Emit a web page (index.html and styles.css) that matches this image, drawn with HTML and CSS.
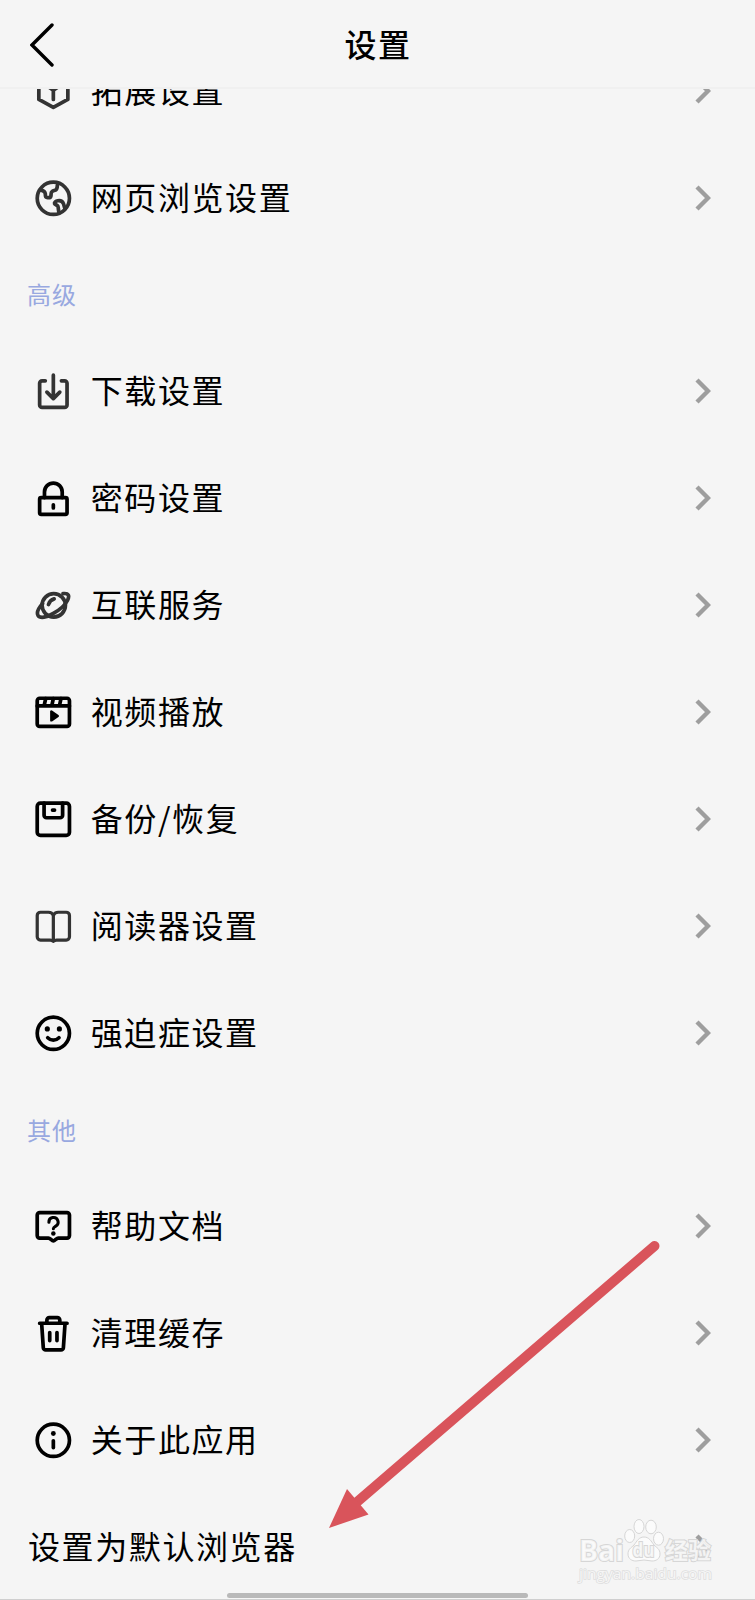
FILE: index.html
```html
<!DOCTYPE html>
<html lang="zh-CN">
   <head>
      <meta charset="utf-8">
      <title>设置</title>
      <link rel="stylesheet" href="styles.css">
   </head>
   <body>
      <div class="page">
         <div class="header">
            <svg class="back" viewBox="0 0 24 44"><path d="M22 2L2 22l20 20"/></svg>
            <h1 class="title">设置</h1>
         </div>
         <div class="list">
            <div class="row first">
               <svg class="icon dark" viewBox="0 0 48 48"><path d="M24 4L6 13v21l18 10 18-10V13zM15 16.500l9 6 9-6M24 23v11"/></svg>
               <span class="name">拓展设置</span>
               <svg class="more" viewBox="0 0 16 26"><path d="M2 2l11 11L2 24"/></svg>
            </div>
            <div class="row">
               <svg class="icon dark" viewBox="0 0 48 48"><circle cx="24" cy="24" r="20"/><path d="M8.500 13.500c3 1 5 2 5.500 4.500.3 2-.5 4.500 2 5 2.500.5 4.500 0 5-2 .5-2-.5-4 1.500-5.500s4.500-1 5.500-3c.8-1.500 1-3 1-5M38.500 37c-1-2-1-4-2-6.500-1.200-3-4-4-7-3.500-2.500.5-4.500 2-4 3.500.5 1.300 3 1.500 4 3 1 2 .5 5 1.500 8"/></svg>
               <span class="name">网页浏览设置</span>
               <svg class="more" viewBox="0 0 16 26"><path d="M2 2l11 11L2 24"/></svg>
            </div>

            <h2 class="group">高级</h2>
            <div class="row">
               <svg class="icon dark" viewBox="0 0 48 48"><path d="M14 11h-4a3 3 0 0 0-3 3v27a3 3 0 0 0 3 3h28a3 3 0 0 0 3-3V14a3 3 0 0 0-3-3h-4M24 4v28M16 25l8 8 8-8"/></svg>
               <span class="name">下载设置</span>
               <svg class="more" viewBox="0 0 16 26"><path d="M2 2l11 11L2 24"/></svg>
            </div>
            <div class="row">
               <svg class="icon" viewBox="0 0 48 48"><rect x="7" y="23" width="34" height="21" rx="2"/><path d="M13 23v-7a11 11 0 0 1 22 0v7M24 32v4"/></svg>
               <span class="name">密码设置</span>
               <svg class="more" viewBox="0 0 16 26"><path d="M2 2l11 11L2 24"/></svg>
            </div>
            <div class="row">
               <svg class="icon dark" viewBox="0 0 48 48"><circle cx="24.500" cy="24" r="14.500"/><path d="M10.500 22C6 27 3 33 5 36.500c2.500 4 11 2.500 19-2.500 8-4.500 14.500-10 17.500-16 3-6 1.500-9.500-5.500-8.500M18 23c1-3.500 3.500-6 7-7"/></svg>
               <span class="name">互联服务</span>
               <svg class="more" viewBox="0 0 16 26"><path d="M2 2l11 11L2 24"/></svg>
            </div>
            <div class="row">
               <svg class="icon" viewBox="0 0 48 48"><rect x="4" y="6.500" width="40" height="35" rx="3"/><path d="M4 16h40M14.500 7l-2 9M24 7l-2 9M33.500 7l-2 9"/><path class="solid" d="M21.500 23v11l8-5.500z"/></svg>
               <span class="name">视频播放</span>
               <svg class="more" viewBox="0 0 16 26"><path d="M2 2l11 11L2 24"/></svg>
            </div>
            <div class="row">
               <svg class="icon" viewBox="0 0 48 48"><rect x="4" y="4" width="40" height="40" rx="4"/><path d="M12.500 4v15a3 3 0 0 0 3 3h17a3 3 0 0 0 3-3V4M23 12.500h2.500"/></svg>
               <span class="name">备份/恢复</span>
               <svg class="more" viewBox="0 0 16 26"><path d="M2 2l11 11L2 24"/></svg>
            </div>
            <div class="row">
               <svg class="icon dark thin" viewBox="0 0 48 48"><path d="M24 10.500c-1-2.500-3-4-6-4H8a4 4 0 0 0-4 4V37a4 4 0 0 0 4 4h12c2 0 3 .5 4 1.500 1-1 2-1.500 4-1.500h12a4 4 0 0 0 4-4V10.500a4 4 0 0 0-4-4H30c-3 0-5 1.500-6 4zv32"/></svg>
               <span class="name">阅读器设置</span>
               <svg class="more" viewBox="0 0 16 26"><path d="M2 2l11 11L2 24"/></svg>
            </div>
            <div class="row">
               <svg class="icon" viewBox="0 0 48 48"><circle cx="24" cy="24" r="20"/><path d="M17 29.500c4 4 10 4 14 0"/><circle class="dot" cx="16.500" cy="18.500" r="3.200"/><circle class="dot" cx="31.500" cy="18.500" r="3.200"/></svg>
               <span class="name">强迫症设置</span>
               <svg class="more" viewBox="0 0 16 26"><path d="M2 2l11 11L2 24"/></svg>
            </div>

            <h2 class="group other">其他</h2>
            <div class="row">
               <svg class="icon" viewBox="0 0 48 48"><path d="M7 7h34a3 3 0 0 1 3 3v25.500a3 3 0 0 1-3 3H30c-2 0-4 3.500-6 3.500s-4-3.500-6-3.500H7a3 3 0 0 1-3-3V10a3 3 0 0 1 3-3z"/><path class="q" d="M18.500 19a5.700 5.700 0 1 1 8.500 4.700c-2 1.200-3 2-3 3.300"/><circle class="dot" cx="24" cy="33" r="2.800"/></svg>
               <span class="name">帮助文档</span>
               <svg class="more" viewBox="0 0 16 26"><path d="M2 2l11 11L2 24"/></svg>
            </div>
            <div class="row">
               <svg class="icon" viewBox="0 0 48 48"><path d="M7 11.500h34M16 11V7.500a3 3 0 0 1 3-3h10a3 3 0 0 1 3 3V11M9.500 12l2 29.500a3 3 0 0 0 3 3h19a3 3 0 0 0 3-3l2-29.500M19.500 23v10M28.500 23v10"/></svg>
               <span class="name">清理缓存</span>
               <svg class="more" viewBox="0 0 16 26"><path d="M2 2l11 11L2 24"/></svg>
            </div>
            <div class="row">
               <svg class="icon" viewBox="0 0 48 48"><circle cx="24" cy="24" r="20"/><path d="M24 24.500v8.500"/><circle class="dot" cx="24" cy="15.500" r="3"/></svg>
               <span class="name">关于此应用</span>
               <svg class="more" viewBox="0 0 16 26"><path d="M2 2l11 11L2 24"/></svg>
            </div>
            <div class="row plain">
               <span class="name">设置为默认浏览器</span>
               <svg class="more" viewBox="0 0 16 26"><path d="M2 2l11 11L2 24"/></svg>
            </div>
         </div>

         <svg class="arrow" viewBox="0 0 340 296">
            <path class="shaft" d="M329.500 11L32 267"/>
            <path class="head" d="M4 293l18-39 21.500 25.500z"/>
         </svg>

         <svg class="watermark" viewBox="0 0 145 75">
            <text class="brand" x="4" y="46" textLength="45" lengthAdjust="spacingAndGlyphs">Bai</text>
            <ellipse cx="54.700" cy="21" rx="5" ry="6.500"/>
            <ellipse cx="64" cy="11.500" rx="5" ry="7"/>
            <ellipse cx="76" cy="12" rx="5.300" ry="6.800"/>
            <ellipse cx="83.500" cy="23.700" rx="5" ry="6.500"/>
            <path d="M69 22c5 0 7 4 10 8 3 3 6 4 6 9 0 5-4 7-8 7-3 0-5-1-8-1s-5 1-8 1c-4 0-8-2-8-7s3-6 6-9c3-4 5-8 10-8z"/>
            <text class="du" x="57.500" y="41.500" textLength="22" lengthAdjust="spacingAndGlyphs">du</text>
            <text class="cn" x="90" y="44" textLength="46" lengthAdjust="spacingAndGlyphs">经验</text>
            <text class="url" x="4" y="64" textLength="133" lengthAdjust="spacingAndGlyphs">jingyan.baidu.com</text>
         </svg>
         <div class="homebar"></div>
      </div>
   </body>
</html>
```

FILE: styles.css
```css
body{
margin: 0;
background-color: #f5f5f5;
font-family: "Noto Sans CJK SC", sans-serif;
color: #000;
}
.page{
position: relative;
box-sizing: border-box;
height: 1600px;
overflow: hidden;
border-bottom: 1px solid #cfcfcf;
display: flex;
flex-direction: column;
}
.header{
box-sizing: border-box;
flex: none;
height: 89px;
padding: 0 31px 0 30px;
border-bottom: 2px solid #f0f0f0;
display: grid;
grid-template-columns: 24px 1fr 24px;
align-items: center;
}
.back{
width: 24px;
height: 44px;
margin-top: 3px;
fill: none;
stroke: #000;
stroke-width: 3.4;
stroke-linecap: round;
}
.title{
margin: 0 0 1px 2px;
font-size: 32px;
font-weight: 500;
line-height: 44px;
letter-spacing: 1.6px;
text-align: center;
}
.list{
flex: 1;
overflow: hidden;
}
.row{
box-sizing: border-box;
height: 107px;
padding: 0 42px 0 34px;
display: flex;
align-items: center;
}
.first{
margin-top: -51px;
}
.plain{
padding-left: 28px;
}
.icon{
width: 38.7px;
height: 38.7px;
margin-right: 18px;
flex: none;
fill: none;
stroke: #000;
stroke-width: 4.6;
stroke-linecap: round;
stroke-linejoin: round;
}
.dark{
stroke: #333;
}
.thin{
stroke-width: 4;
}
.q{
stroke-width: 3.8;
}
.icon .solid{
fill: #000;
stroke-width: 3;
}
.icon .dot{
fill: #000;
stroke: none;
}
.name{
flex: 1;
padding-bottom: 5px;
font-size: 32px;
line-height: 44px;
letter-spacing: 1.6px;
}
.more{
width: 16px;
height: 26px;
flex: none;
margin: 0 2px 1px 0;
fill: none;
stroke: #9e9e9e;
stroke-width: 4.4;
}
.group{
box-sizing: border-box;
margin: 0;
padding-left: 27px;
height: 86px;
font-size: 24px;
font-weight: 400;
line-height: 83px;
letter-spacing: 1px;
color: #98a8e0;
}
.other{
line-height: 85px;
}
/* red pointer over the list */
.arrow{
position: absolute;
left: 325px;
top: 1235px;
width: 340px;
height: 296px;
}
.shaft{
stroke: #d9545b;
stroke-width: 10;
stroke-linecap: round;
}
.head{
fill: #d9545b;
}
.watermark{
position: absolute;
left: 575px;
top: 1515px;
width: 145px;
height: 75px;
fill: #fcfcfc;
fill-opacity: 0.8;
stroke: #d6d6d6;
stroke-width: 1;
}
.watermark text{
paint-order: stroke;
stroke-width: 2;
}
.brand{
font: bold 29px "Open Sans", sans-serif;
}
.watermark .du{
font: bold 19px "Open Sans", sans-serif;
}
.cn{
font: bold 23px "Noto Sans CJK SC", sans-serif;
}
.watermark .url{
font: 15px "Open Sans", sans-serif;
stroke-width: 1.5;
stroke: #dedede;
}
/* system gesture bar */
.homebar{
position: absolute;
left: 227px;
top: 1593px;
width: 301px;
height: 5px;
border-radius: 3px;
background-color: #b9b9b9;
}
```
